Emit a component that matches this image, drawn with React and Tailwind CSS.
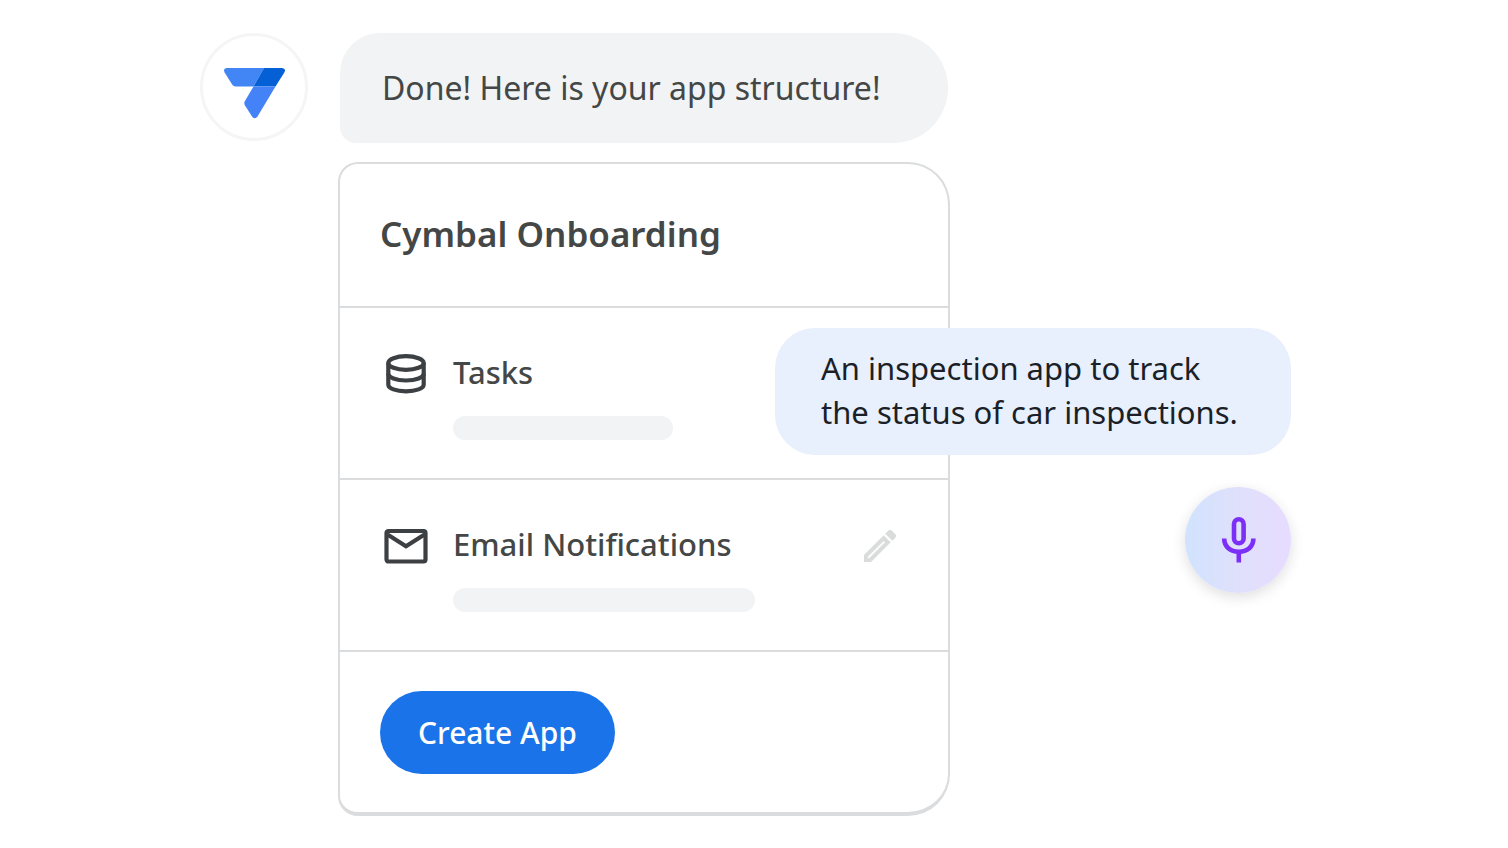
function AppLogo() {
  return (
    <svg viewBox="0 0 61 51" className="h-[51px] w-[61px]" aria-hidden="true">
      <path d="M3 0H40L29.500 18.500H11.500Q9.500 18.500 8.300 16.700L0.600 4.500Q-1.200 0.300 3 0Z" fill="#4285f4" />
      <path d="M40 0H58Q62.500 0.500 60.300 4.500L51.500 18.500H29.500Z" fill="#0560d6" />
      <path d="M29.500 18.400H51.500L33.500 48.500Q31 52 28.200 48.800L21 37.500Q19.700 35.200 20.800 33.200Z" fill="#4382f7" />
    </svg>
  );
}

function DatabaseIcon() {
  return (
    <svg viewBox="0 0 44 44" className="size-11" fill="none" stroke="#3c4043" strokeWidth="4.200" aria-hidden="true">
      <ellipse cx="22" cy="11" rx="17.700" ry="6.800" />
      <path d="M4.300 11V32.500C4.300 36.500 12 39.300 22 39.300S39.700 36.500 39.700 32.500V11" />
      <path d="M4.300 21.500C4.300 25.500 12 28.500 22 28.500S39.700 25.500 39.700 21.500" />
    </svg>
  );
}

function MailIcon() {
  return (
    <svg viewBox="0 0 44 44" className="size-11" fill="none" stroke="#3c4043" strokeWidth="4.200" aria-hidden="true">
      <rect x="2.500" y="7" width="39" height="30.500" rx="2" />
      <path d="M3.500 10.500L22 22.300L40.500 10.500" />
    </svg>
  );
}

function PencilIcon() {
  return (
    <svg viewBox="3 3 18 18" className="size-8" fill="#dadcdc" stroke="#dadcdc" strokeWidth="0.400" aria-hidden="true">
      <path d="M14.060 9.020l.92.920L5.920 19H5v-.920l9.060-9.060M17.660 3c-.250 0-.510.100-.700.290l-1.830 1.830 3.750 3.750 1.830-1.830c.390-.390.390-1.020 0-1.410l-2.340-2.340c-.200-.200-.450-.290-.710-.290zm-3.600 3.190L3 17.250V21h3.750L17.810 9.940l-3.750-3.750z" />
    </svg>
  );
}

function MicIcon() {
  return (
    <svg viewBox="0 0 36 48" className="h-12 w-9" fill="none" stroke="#7b2ff7" strokeWidth="4.600" aria-hidden="true">
      <rect x="14" y="3.300" width="9.600" height="24" rx="4.800" />
      <path d="M4.200 22.500C4.200 30.700 10.400 35.700 18.800 35.700S33.400 30.700 33.400 22.500" />
      <path d="M18.800 35.700V46.500" />
    </svg>
  );
}

const rows = [
  { title: "Tasks", Icon: DatabaseIcon, bar: "w-[220px]", editable: false },
  { title: "Email Notifications", Icon: MailIcon, bar: "w-[302px]", editable: true },
];

export default function App() {
  return (
    <main className="min-h-screen bg-white pt-[33px] pr-[217px] pb-8 pl-[200px] font-['Noto_Sans',sans-serif] text-[#444746]">
      <div className="relative">
        <div className="flex items-start gap-8">
          <div className="flex size-[108px] shrink-0 items-center justify-center rounded-full border-[3px] border-[#f5f5f5] bg-white pt-3">
            <AppLogo />
          </div>
          <p className="w-full max-w-[608px] rounded-l-[40px] rounded-r-[55px] rounded-bl-2xl bg-[#f1f3f4] px-[42px] py-[31px] text-[32px] leading-[48px]">
            Done! Here is your app structure!
          </p>
        </div>

        <section className="mt-[19px] ml-[138px] max-w-[612px] rounded-l-[20px] rounded-r-[42px] border-2 border-b-4 border-[#dadcdd]">
          <h1 className="border-b-2 border-[#dadcdd] px-10 pt-[46px] pb-12 text-[35px] leading-[48px] font-semibold">
            Cymbal Onboarding
          </h1>
          <ul>
            {rows.map(({ title, Icon, bar, editable }) => (
              <li key={title} className="flex items-start gap-[25px] border-b-2 border-[#dadcdd] pt-11 pr-[52px] pb-[38px] pl-11">
                <Icon />
                <div className="flex-1">
                  <h2 className="text-[31px] leading-10 font-medium">{title}</h2>
                  <div className={`mt-6 h-6 rounded-full bg-[#f1f3f4] ${bar}`} />
                </div>
                {editable && (
                  <button type="button" aria-label="Edit" className="mt-1.5">
                    <PencilIcon />
                  </button>
                )}
              </li>
            ))}
          </ul>
          <div className="px-10 pt-[39px] pb-[38px]">
            <button type="button" className="rounded-full bg-[#1a73e8] px-[38px] py-5 text-[30px] leading-[43px] font-medium text-white">
              Create App
            </button>
          </div>
        </section>

        <div className="absolute top-[295px] right-0 flex flex-col items-end gap-8">
          <p className="w-[516px] rounded-[40px] bg-[#e8effd] px-[46px] pt-[18px] pb-[21px] text-[31px] leading-[44px] text-[#1b1f27]">
            An inspection app to track
            <br />
            the status of car inspections.
          </p>
          <button
            type="button"
            aria-label="Voice input"
            className="flex size-[106px] items-center justify-center rounded-full bg-linear-to-r from-[#d0e3fe] via-[#e0e0fb] to-[#e6dcff] shadow-[0_4px_14px_rgba(0,0,0,0.13)]"
          >
            <MicIcon />
          </button>
        </div>
      </div>
    </main>
  );
}
